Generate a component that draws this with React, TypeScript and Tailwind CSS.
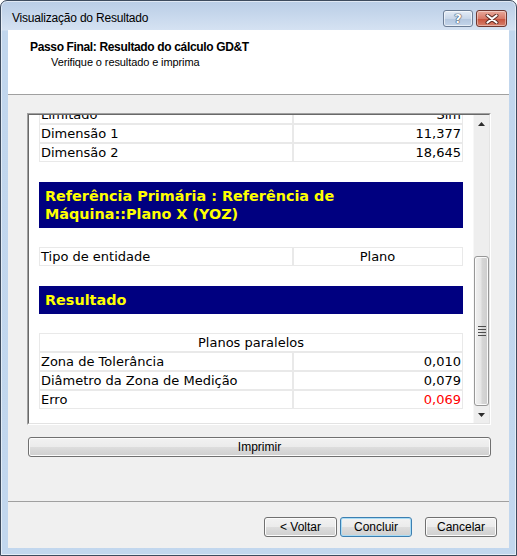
import type { ReactNode } from 'react';

const uiFont = { fontFamily: '"Liberation Sans", Arial, sans-serif' };
const contentFont = { fontFamily: '"DejaVu Sans", Verdana, sans-serif' };

const Row = ({ label, value, valueClass = '', center = false }: { label?: ReactNode; value?: ReactNode; valueClass?: string; center?: boolean }) => (
    <div className="flex h-[19px]">
        <div className="w-[254px] border border-[#e9e9e9] pl-[1px] flex items-center whitespace-nowrap">{label}</div>
        <div className={`flex-1 border border-[#e9e9e9] pr-[1px] flex items-center ${center ? 'justify-center' : 'justify-end'} ${valueClass}`}>{value}</div>
    </div>
);

const SectionTitle = ({ children }: { children: ReactNode }) => (
    <div className="bg-[#000080] text-[#ffff00] font-bold text-[14.4px] leading-[18px] px-[6px] py-[5px]">{children}</div>
);

const WinButton = ({ label, primary = false, className = '' }: { label: string; primary?: boolean; className?: string }) => (
    <button
        className={`h-[20px] rounded-[3px] border text-[12px] text-black flex items-center justify-center bg-[linear-gradient(to_bottom,#f2f2f2_0%,#ebebeb_50%,#dddddd_51%,#cfcfcf_100%)] ${primary ? 'border-[#3c7fb1] shadow-[inset_0_0_0_1px_#a9dcf5]' : 'border-[#707070] shadow-[inset_0_0_0_1px_#fcfcfc]'} ${className}`}
    >
        {label}
    </button>
);

export default function App() {
    return (
        <div className="w-[517px] h-[556px] bg-white" style={uiFont}>
            <div className="w-full h-full flex flex-col rounded-t-[7px] border border-[#3d4b5e] px-[7px] pb-[7px] shadow-[inset_0_0_0_1px_rgba(255,255,255,0.55)] bg-[linear-gradient(to_bottom,#b9cde6_0px,#d5e2f2_29px,#c1d6ed_30px,#c2d7ee_100%)]">
                {/* Title bar */}
                <div className="h-[29px] flex items-start justify-between pl-[4px] pr-[2px]">
                    <div className="pt-[10px] text-[12px] leading-[15px] text-black tracking-[-0.2px]">Visualização do Resultado</div>
                    <div className="flex gap-[3px] pt-[9px]">
                        <div className="w-[30px] h-[17px] rounded-[3px] border border-[#6b7c94] flex items-center justify-center bg-[linear-gradient(to_bottom,#e4ecf6_0%,#c9d7e9_50%,#b3c6de_51%,#c4d5ea_100%)] shadow-[inset_0_0_0_1px_rgba(255,255,255,0.6)]">
                            <span className="text-[13px] leading-none font-bold text-white [text-shadow:0_0_1px_#2e3f57,0_0_1px_#2e3f57,0_0_1px_#2e3f57]" style={{ fontFamily: '"DejaVu Sans", sans-serif' }}>?</span>
                        </div>
                        <div className="w-[31px] h-[17px] rounded-[3px] border border-[#6e3730] flex items-center justify-center bg-[linear-gradient(to_bottom,#e9aa9c_0%,#d87a68_50%,#c8503a_51%,#d6806c_100%)] shadow-[inset_0_0_0_1px_rgba(255,255,255,0.4)]">
                            <svg width="14" height="10" viewBox="0 0 14 10">
                                <path d="M2.5 1.5 L11.5 8.5 M11.5 1.5 L2.5 8.5" stroke="#5a2a22" strokeWidth="4" strokeLinecap="round" />
                                <path d="M2.5 1.5 L11.5 8.5 M11.5 1.5 L2.5 8.5" stroke="#ffffff" strokeWidth="2.2" strokeLinecap="round" />
                            </svg>
                        </div>
                    </div>
                </div>

                {/* Client area */}
                <div className="flex-1 flex flex-col bg-[#f0f0f0]">
                    <div className="h-[65px] bg-white border-b border-[#a0a0a0] pl-[22px] pt-[10px] leading-[15px] text-black">
                        <div className="font-bold text-[12px] tracking-[-0.35px]">Passo Final: Resultado do cálculo GD&amp;T</div>
                        <div className="pl-[21px] text-[11px] tracking-[-0.1px]">Verifique o resultado e imprima</div>
                    </div>

                    <div className="flex-1 flex flex-col pt-[18px]">
                        {/* Result panel */}
                        <div className="ml-[19px] mr-[18px] h-[312px] border border-t-[#a0a0a0] border-l-[#a0a0a0] border-b-white border-r-white">
                            <div className="h-full flex border border-t-[#696969] border-l-[#696969] border-b-[#e3e3e3] border-r-[#e3e3e3]">
                                <div className="flex-1 bg-white overflow-hidden px-[10px] text-[13px] leading-[17px] text-black" style={contentFont}>
                                    <div className="-mt-[10px]">
                                        <Row label="Limitado" value="Sim" />
                                        <Row label="Dimensão 1" value="11,377" />
                                        <Row label="Dimensão 2" value="18,645" />

                                        <div className="mt-[20px]">
                                            <SectionTitle>
                                                Referência Primária : Referência de
                                                <br />
                                                Máquina::Plano X (YOZ)
                                            </SectionTitle>
                                        </div>

                                        <div className="mt-[19px]">
                                            <Row label="Tipo de entidade" value="Plano" center />
                                        </div>

                                        <div className="mt-[20px]">
                                            <SectionTitle>Resultado</SectionTitle>
                                        </div>

                                        <div className="mt-[19px]">
                                            <div className="h-[19px] border border-[#e9e9e9] flex items-center justify-center">Planos paralelos</div>
                                            <Row label="Zona de Tolerância" value="0,010" />
                                            <Row label="Diâmetro da Zona de Medição" value="0,079" />
                                            <Row label="Erro" value="0,069" valueClass="text-[#ff0000]" />
                                        </div>
                                    </div>
                                </div>

                                {/* Scrollbar */}
                                <div className="w-[16px] flex flex-col bg-[#eeeeee] border-l border-[#f7f7f7]">
                                    <div className="h-[17px] flex items-center justify-center">
                                        <svg width="7" height="4" viewBox="0 0 7 4"><path d="M3.5 0 L7 4 L0 4 Z" fill="#2b2b2b" /></svg>
                                    </div>
                                    <div className="flex-1 flex flex-col">
                                        <div className="mt-[124px] h-[150px] mx-[0px] rounded-[3px] border border-[#979797] shadow-[inset_0_0_0_1px_#fafafa] bg-[linear-gradient(to_right,#f1f1f1_0%,#e6e6e6_45%,#d6d6d6_55%,#cdcdcd_100%)] flex items-center justify-center">
                                            <div className="flex flex-col gap-[2px] w-[8px]">
                                                <div className="h-px bg-[#4d4d4d]" />
                                                <div className="h-px bg-[#4d4d4d]" />
                                                <div className="h-px bg-[#4d4d4d]" />
                                                <div className="h-px bg-[#4d4d4d]" />
                                            </div>
                                        </div>
                                    </div>
                                    <div className="h-[17px] flex items-center justify-center">
                                        <svg width="7" height="4" viewBox="0 0 7 4"><path d="M0 0 L7 0 L3.5 4 Z" fill="#2b2b2b" /></svg>
                                    </div>
                                </div>
                            </div>
                        </div>

                        <div className="mt-[12px] ml-[20px] mr-[18px]">
                            <WinButton label="Imprimir" className="w-full" />
                        </div>

                        <div className="flex-1" />

                        <div className="h-[47px] border-t border-[#a0a0a0] flex items-start justify-end pt-[15px] pr-[12px]">
                            <WinButton label="< Voltar" className="w-[73px]" />
                            <WinButton label="Concluir" primary className="w-[72px] ml-[3px]" />
                            <WinButton label="Cancelar" className="w-[72px] ml-[13px]" />
                        </div>
                    </div>
                </div>
            </div>
        </div>
    );
}
